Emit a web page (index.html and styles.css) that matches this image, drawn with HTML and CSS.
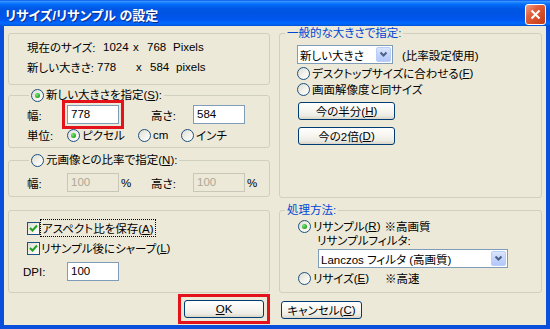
FILE: index.html
```html
<!DOCTYPE html>
<html lang="ja">

<head>
  <meta charset="UTF-8">
  <title>リサイズ/リサンプル の設定</title>
  <link rel="stylesheet" href="styles.css">
</head>

<body>
  <div class="window">
    <div class="titlebar">
      <span class="title">リサイズ/リサンプル の設定</span>
      <span class="close">
        <svg width="11" height="11" viewBox="0 0 11 11"><path d="M1.5 1.5 L9.5 9.5 M9.5 1.5 L1.5 9.5" stroke="#fff" stroke-width="2" /></svg>
      </span>
    </div>

    <div class="client">
      <!-- left column -->
      <div class="col">
        <div class="group info">
          <div class="line"><span class="k1">現在のサイズ:</span><span class="n1">1024</span><span class="x">x</span><span class="n3">768</span><span>Pixels</span></div>
          <div class="line"><span class="k2">新しい大きさ:</span><span class="n2">778</span><span class="x">x</span><span class="n3">584</span><span>pixels</span></div>
        </div>

        <fieldset class="group g-size">
          <legend class="opt-legend"><span class="radio on"></span>新しい大きさを指定(<u>S</u>):</legend>
          <div class="body">
            <div class="row">
              <span class="lbl">幅:</span>
              <span class="edit mark">778</span>
              <span class="unit"></span>
              <span class="lbl2">高さ:</span>
              <span class="edit">584</span>
            </div>
            <div class="row small">
              <span class="lbl">単位:</span>
              <span class="opt w71"><span class="radio on"></span>ピクセル</span>
              <span class="opt w43"><span class="radio"></span>cm</span>
              <span class="opt"><span class="radio"></span>インチ</span>
            </div>
          </div>
        </fieldset>

        <fieldset class="group g-ratio">
          <legend class="opt-legend"><span class="radio"></span>元画像との比率で指定(<u>N</u>):</legend>
          <div class="body">
            <div class="row">
              <span class="lbl">幅:</span>
              <span class="edit off">100</span>
              <span class="unit">%</span>
              <span class="lbl2">高さ:</span>
              <span class="edit off">100</span>
              <span class="unit">%</span>
            </div>
          </div>
        </fieldset>

        <div class="group g-opts">
          <div class="row small"><span class="check"><svg width="11" height="11" viewBox="0 0 11 11"><path d="M2 5 L4.5 7.5 L9 2.5" fill="none" stroke="#21a121" stroke-width="2" /></svg></span><span class="focus">アスペクト比を保存(<u>A</u>)</span></div>
          <div class="row small gap4"><span class="check"><svg width="11" height="11" viewBox="0 0 11 11"><path d="M2 5 L4.5 7.5 L9 2.5" fill="none" stroke="#21a121" stroke-width="2" /></svg></span>リサンプル後にシャープ(<u>L</u>)</div>
          <div class="row dpi"><span class="lbl-dpi">DPI:</span><span class="edit">100</span></div>
        </div>

        <div class="actions end">
          <span class="mark-box"><span class="btn ok"><u>O</u>K</span></span>
        </div>
      </div>

      <!-- right column -->
      <div class="col">
        <fieldset class="group g-common">
          <legend class="blue-legend">一般的な大きさで指定:</legend>
          <div class="body">
            <div class="row">
              <span class="combo w96"><span class="txt">新しい大きさ</span><span class="arrow"><svg width="9" height="7" viewBox="0 0 9 7"><path d="M1.5 1.5 L4.5 4.5 L7.5 1.5" fill="none" stroke="#4d6185" stroke-width="2" /></svg></span></span>
              <span class="note">(比率設定使用)</span>
            </div>
            <div class="row small first"><span class="radio"></span>デスクトップサイズに合わせる(<u>F</u>)</div>
            <div class="row small"><span class="radio"></span>画面解像度と同サイズ</div>
            <span class="btn wide b1">今の半分(<u>H</u>)</span>
            <span class="btn wide b2">今の2倍(<u>D</u>)</span>
          </div>
        </fieldset>

        <fieldset class="group g-method">
          <legend class="blue-legend">処理方法:</legend>
          <div class="body">
            <div class="row small first"><span class="opt w72"><span class="radio on"></span>リサンプル(<u>R</u>)</span>※高画質</div>
            <div class="filter-label">リサンプルフィルタ:</div>
            <span class="combo w190"><span class="txt">Lanczos フィルタ (高画質)</span><span class="arrow"><svg width="9" height="7" viewBox="0 0 9 7"><path d="M1.5 1.5 L4.5 4.5 L7.5 1.5" fill="none" stroke="#4d6185" stroke-width="2" /></svg></span></span>
            <div class="row small last"><span class="opt w87"><span class="radio"></span>リサイズ(<u>E</u>)</span>※高速</div>
          </div>
        </fieldset>

        <div class="actions">
          <span class="btn cancel">キャンセル(<u>C</u>)</span>
        </div>
      </div>
    </div>
  </div>
</body>

</html>
```

FILE: styles.css
```css
/* Global */
* {
  box-sizing: border-box;
}

body {
  margin: 0;
  font-family: "Liberation Sans", "Noto Sans CJK JP", sans-serif;
  font-size: 11.5px;
  font-feature-settings: "palt";
  color: #000;
  background: #fff;
}

u {
  text-decoration: underline;
  text-underline-offset: 1px;
}

/* Window frame */
.window {
  width: 550px;
  height: 329px;
  display: flex;
  flex-direction: column;
  background: #0a4fdc;
}

.titlebar {
  height: 26px;
  flex: none;
  display: flex;
  align-items: center;
  justify-content: space-between;
  padding: 2px 4px 0 5px;
  background: linear-gradient(to bottom, #0058ee 0%, #3a93ff 6%, #1a83ff 10%, #036ffc 16%, #0262ee 24%, #0057e5 34%, #0054e3 46%, #0055eb 70%, #005bf5 80%, #026afe 88%, #0062ef 94%, #0052d6 100%);
}

.title {
  color: #fff;
  font-weight: bold;
  font-size: 13px;
  text-shadow: 1px 1px 0 #0b2a8a;
}

.close {
  width: 21px;
  height: 21px;
  border: 1px solid #fff;
  border-radius: 3px;
  background: linear-gradient(135deg, #f0a08a 0%, #e2603e 35%, #d24a24 70%, #c03c1a 100%);
  display: flex;
  align-items: center;
  justify-content: center;
}

.client {
  flex: 1;
  margin: 0 4px 4px;
  padding: 0 4px;
  background: #ece9d8;
  display: grid;
  grid-template-columns: 262px 263px;
  column-gap: 9px;
}

.col {
  display: flex;
  flex-direction: column;
}

/* Group boxes */
.group {
  border: 1px solid #d0d0bf;
  border-radius: 3px;
  margin: 0;
  padding: 0;
  min-width: 0;
}

legend {
  height: 14px;
  line-height: 14px;
  display: flex;
  align-items: center;
}

.opt-legend {
  margin-left: 20px;
  padding: 0 2px;
}

.blue-legend {
  margin-left: 5px;
  padding: 0 2px;
  color: #0046d5;
}

.row {
  display: flex;
  align-items: center;
  height: 19px;
  white-space: nowrap;
}

.row.small {
  height: 16px;
}

/* Info group */
.info {
  margin-top: 7px;
  height: 52px;
  padding: 3px 0 0 18px;
}

.line {
  display: flex;
  height: 20px;
  align-items: center;
  white-space: nowrap;
}

.line span {
  flex: none;
  padding-right: 3px;
}

.k1 { min-width: 76px; }
.k2 { min-width: 67px; }
.n1 { min-width: 30px; }
.n2 { min-width: 39px; }
.x { min-width: 14px; }
.n3 { min-width: 26px; }

/* Size group */
.g-size {
  margin-top: 3px;
}

.g-size .body {
  padding: 3px 0 4px 18px;
}

.g-size .row.small {
  margin-top: 3px;
}

.g-ratio {
  margin-top: 5px;
}

.g-ratio .body {
  padding: 6px 0 4px 18px;
}

.lbl { width: 40px; flex: none; }
.lbl2 { width: 42px; flex: none; }

.unit {
  width: 32px;
  flex: none;
  padding-left: 2px;
}

.opt {
  display: flex;
  align-items: center;
  flex: none;
  padding-right: 4px;
}

.w71 { min-width: 71px; }
.w43 { min-width: 43px; }
.w72 { min-width: 72px; }
.w87 { min-width: 87px; }

/* Edit boxes */
.edit {
  width: 52px;
  height: 19px;
  border: 1px solid #7f9db9;
  background: #fff;
  padding: 0 3px;
  line-height: 17px;
  flex: none;
}

.edit.off {
  border-color: #c9c7ba;
  background: #ece9d8;
  color: #aca899;
}

.mark {
  outline: 3px solid #e3121b;
  outline-offset: 2px;
}

/* Radio & check */
.radio {
  width: 13px;
  height: 13px;
  flex: none;
  border-radius: 50%;
  border: 1px solid #1c5180;
  background: linear-gradient(135deg, #dcdcd3 0%, #f5f4ee 60%, #fff 100%);
  margin-right: 2px;
  position: relative;
}

.radio.on::after {
  content: "";
  position: absolute;
  left: 3px;
  top: 3px;
  width: 5px;
  height: 5px;
  border-radius: 50%;
  background: radial-gradient(circle at 35% 35%, #7fe57f 0%, #2fb22f 55%, #178a17 100%);
}

.check {
  width: 13px;
  height: 13px;
  flex: none;
  border: 1px solid #1c5180;
  background: linear-gradient(135deg, #dcdcd3 0%, #f5f4ee 60%, #fff 100%);
  margin-right: 1px;
  display: flex;
  align-items: center;
  justify-content: center;
}

.focus {
  outline: 1px dotted #000;
  outline-offset: 0;
  padding: 0 1px;
}

/* Options group */
.g-opts {
  margin-top: 13px;
  padding: 9px 0 11px 18px;
}

.gap4 {
  margin-top: 4px;
}

.dpi {
  margin-top: 6px;
}

.lbl-dpi {
  margin-left: -4px;
  width: 44px;
}

/* Buttons */
.actions {
  display: flex;
  margin-top: 7px;
}

.actions.end {
  justify-content: flex-end;
  margin-top: 1px;
  padding-right: 0;
}

.mark-box {
  border: 3px solid #e3121b;
  padding: 3px;
}

.btn {
  height: 18px;
  border: 1px solid #003c74;
  border-radius: 3px;
  background: linear-gradient(to bottom, #fff 0%, #f7f6f1 45%, #ecebe4 80%, #d8d4c6 100%);
  display: flex;
  align-items: center;
  justify-content: center;
  white-space: nowrap;
}

.ok {
  width: 80px;
}

.cancel {
  width: 81px;
  margin-left: 2px;
  margin-top: 1px;
}

.wide {
  width: 97px;
  margin-left: 1px;
}

.b1 { margin-top: 5px; }
.b2 { margin-top: 7px; }

/* Combo boxes */
.combo {
  height: 19px;
  border: 1px solid #7f9db9;
  background: #fff;
  display: flex;
  align-items: center;
  padding-left: 2px;
  flex: none;
}

.combo .txt {
  flex: 1;
  white-space: nowrap;
}

.combo .arrow {
  width: 15px;
  height: 15px;
  margin-right: 1px;
  border: 1px solid #b9cdf9;
  border-radius: 2px;
  background: linear-gradient(to bottom, #dbe6fe 0%, #c3d5fd 50%, #b3c8fb 100%);
  display: flex;
  align-items: center;
  justify-content: center;
}

.w96 { width: 96px; }
.w190 { width: 190px; margin-left: 20px; margin-top: 1px; }

.note {
  margin-left: 9px;
}

/* Right groups */
.g-common .body {
  padding: 5px 0 52px 17px;
  display: flex;
  flex-direction: column;
  align-items: flex-start;
}

.g-common .row.first {
  margin-top: 1px;
}

.g-method {
  margin-top: 5px;
}

.g-method .body {
  padding: 0 0 6px 18px;
  display: flex;
  flex-direction: column;
  align-items: flex-start;
}

.g-method .row.first {
  margin-top: 1px;
}

.filter-label {
  height: 14px;
  line-height: 14px;
  margin-left: 19px;
}

.g-method .row.last {
  margin-top: 2px;
}
```
